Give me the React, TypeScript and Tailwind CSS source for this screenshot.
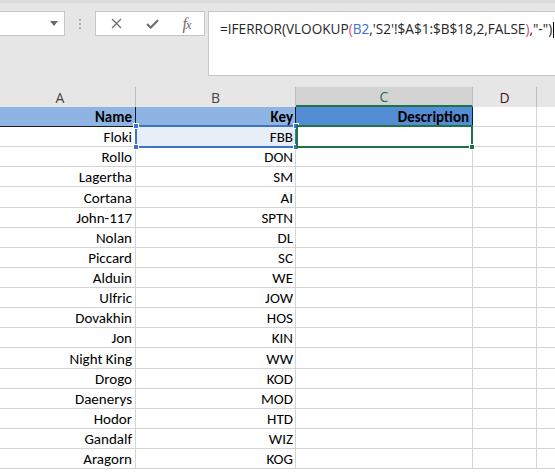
import React from 'react';

const rows: [string, string][] = [
  ['Floki', 'FBB'],
  ['Rollo', 'DON'],
  ['Lagertha', 'SM'],
  ['Cortana', 'AI'],
  ['John-117', 'SPTN'],
  ['Nolan', 'DL'],
  ['Piccard', 'SC'],
  ['Alduin', 'WE'],
  ['Ulfric', 'JOW'],
  ['Dovakhin', 'HOS'],
  ['Jon', 'KIN'],
  ['Night King', 'WW'],
  ['Drogo', 'KOD'],
  ['Daenerys', 'MOD'],
  ['Hodor', 'HTD'],
  ['Gandalf', 'WIZ'],
  ['Aragorn', 'KOG'],
];

const cellFont = { fontFamily: 'Carlito, Lato, "Liberation Sans", sans-serif' };
const uiFont = { fontFamily: '"Segoe UI", "Open Sans", "Noto Sans", sans-serif' };

function Handle({ className }: { className: string }) {
  return <div className={`absolute w-[6px] h-[6px] bg-[#3a73c9] border border-white ${className}`}></div>;
}

export default function App() {
  return (
    <div className="w-[555px] h-[475px] overflow-hidden bg-white relative select-none">
      {/* Formula bar */}
      <div className="h-[87px] bg-[#e6e6e6] flex items-start pt-[8px] border-t-[3px] border-[#dcdcdc]">
        {/* Name box */}
        <div className="w-[65px] shrink-0 h-[25px] bg-white border border-l-0 border-[#c6c6c6] flex items-center justify-end pr-[6px]">
          <svg width="8" height="5" viewBox="0 0 8 5">
            <path d="M0 0 L8 0 L4 5 Z" fill="#6b6b6b" />
          </svg>
        </div>
        {/* grip */}
        <div className="w-[30px] shrink-0 h-[25px] flex flex-col items-center justify-center gap-[2px]">
          <div className="w-[2px] h-[2px] bg-[#b0b0b0]"></div>
          <div className="w-[2px] h-[2px] bg-[#b0b0b0]"></div>
          <div className="w-[2px] h-[2px] bg-[#b0b0b0]"></div>
        </div>
        {/* buttons */}
        <div className="w-[110px] shrink-0 h-[25px] bg-white border border-[#c6c6c6] flex items-center">
          <div className="w-[38px] flex justify-center pl-[2px]">
            <svg width="11" height="11" viewBox="0 0 11 11">
              <path d="M1 1 L10 10 M10 1 L1 10" stroke="#6f6f6f" strokeWidth="1.3" />
            </svg>
          </div>
          <div className="w-[36px] flex justify-center">
            <svg width="13" height="10" viewBox="0 0 13 10">
              <path d="M1 5 L4.8 8.5 L12 1.2" stroke="#6f6f6f" strokeWidth="2.2" fill="none" />
            </svg>
          </div>
          <div
            className="w-[34px] flex justify-center items-baseline text-[16px] italic text-[#6f6f6f] leading-none"
            style={{ fontFamily: '"Liberation Serif", serif' }}
          >
            f<span className="text-[13px] -ml-[1px]">x</span>
          </div>
        </div>
        {/* formula */}
        <div
          className="ml-[3px] flex-1 min-w-0 h-[65px] bg-white border border-r-0 border-[#c6c6c6] pl-[11px] pt-[7px] text-[13.6px] text-[#262626] whitespace-nowrap overflow-hidden"
          style={uiFont}
        >
          =IFERROR(VLOOKUP<span className="text-[#e0457b]">(</span>
          <span className="text-[#3a73c9]">B2</span>,'S2'!$A$1:$B$18,2,FALSE
          <span className="text-[#e0457b]">)</span>,"-")
          <span className="inline-block w-px h-[16px] bg-black align-middle ml-[1px]"></span>
        </div>
      </div>

      {/* Column headers */}
      <div className="h-[20px] flex bg-[#e6e6e6] text-[14px] text-[#444]" style={uiFont}>
        <div className="w-[136px] border-r border-[#c0c0c0] flex items-center justify-center pr-[15px]">A</div>
        <div className="w-[160px] border-r border-[#c0c0c0] flex items-center justify-center">B</div>
        <div className="w-[177px] bg-[#d2d2d2] border-b-2 border-[#217346] text-[#217346] flex items-center justify-center border-r border-r-[#c0c0c0]">
          C
        </div>
        <div className="w-[64px] border-r border-[#c0c0c0] flex items-center justify-center text-[#44131a]">D</div>
        <div className="flex-1"></div>
      </div>

      {/* Grid */}
      <div className="relative text-[15px] text-black" style={cellFont}>
        {/* Row 1 */}
        <div className="h-[20px] flex font-bold">
          <div className="w-[136px] bg-[#8db4e2] border-r border-b border-[#1a1a1a] flex items-center justify-end pr-[3px] pt-[1px]">Name</div>
          <div className="w-[160px] bg-[#8db4e2] border-r border-b border-[#1a1a1a] flex items-center justify-end pr-[2px] pt-[1px]">Key</div>
          <div className="w-[177px] bg-[#538dd5] border-r border-b border-[#1a1a1a] flex items-center justify-end pr-[3px] pt-[1px]">Description</div>
          <div className="w-[64px] border-r border-b border-[#d4d4d4]"></div>
          <div className="flex-1 border-b border-[#d4d4d4]"></div>
        </div>
        {rows.map(([name, key], i) => (
          <div key={name} className={`flex ${i === 3 || i === 11 ? 'h-[21px]' : 'h-[20px]'}`}>
            <div className="w-[136px] border-r border-b border-[#d4d4d4] flex items-center justify-end pr-[3px] pt-[2px]">{name}</div>
            <div
              className={`w-[160px] border-r border-b border-[#d4d4d4] flex items-center justify-end pr-[2px] pt-[2px] ${
                i === 0 ? 'bg-[#e8eef8]' : ''
              }`}
            >
              {key}
            </div>
            <div className="w-[177px] border-r border-b border-[#d4d4d4]"></div>
            <div className="w-[64px] border-r border-b border-[#d4d4d4]"></div>
            <div className="flex-1 border-b border-[#d4d4d4]"></div>
          </div>
        ))}

        {/* B2 reference highlight */}
        <div className="absolute left-[135px] top-[18px] w-[162px] h-[23px] border-2 border-[#3a73c9]">
          <Handle className="-left-[4px] -top-[4px]" />
          <Handle className="-right-[4px] -top-[4px]" />
          <Handle className="-left-[4px] -bottom-[4px]" />
          <Handle className="-right-[4px] -bottom-[4px]" />
        </div>

        {/* C2 active cell */}
        <div className="absolute left-[296px] top-[18px] w-[177px] h-[23px] border-2 border-[#217346]">
          <div className="absolute -right-[4px] -bottom-[4px] w-[6px] h-[6px] bg-[#217346] border border-white"></div>
        </div>
      </div>
    </div>
  );
}
